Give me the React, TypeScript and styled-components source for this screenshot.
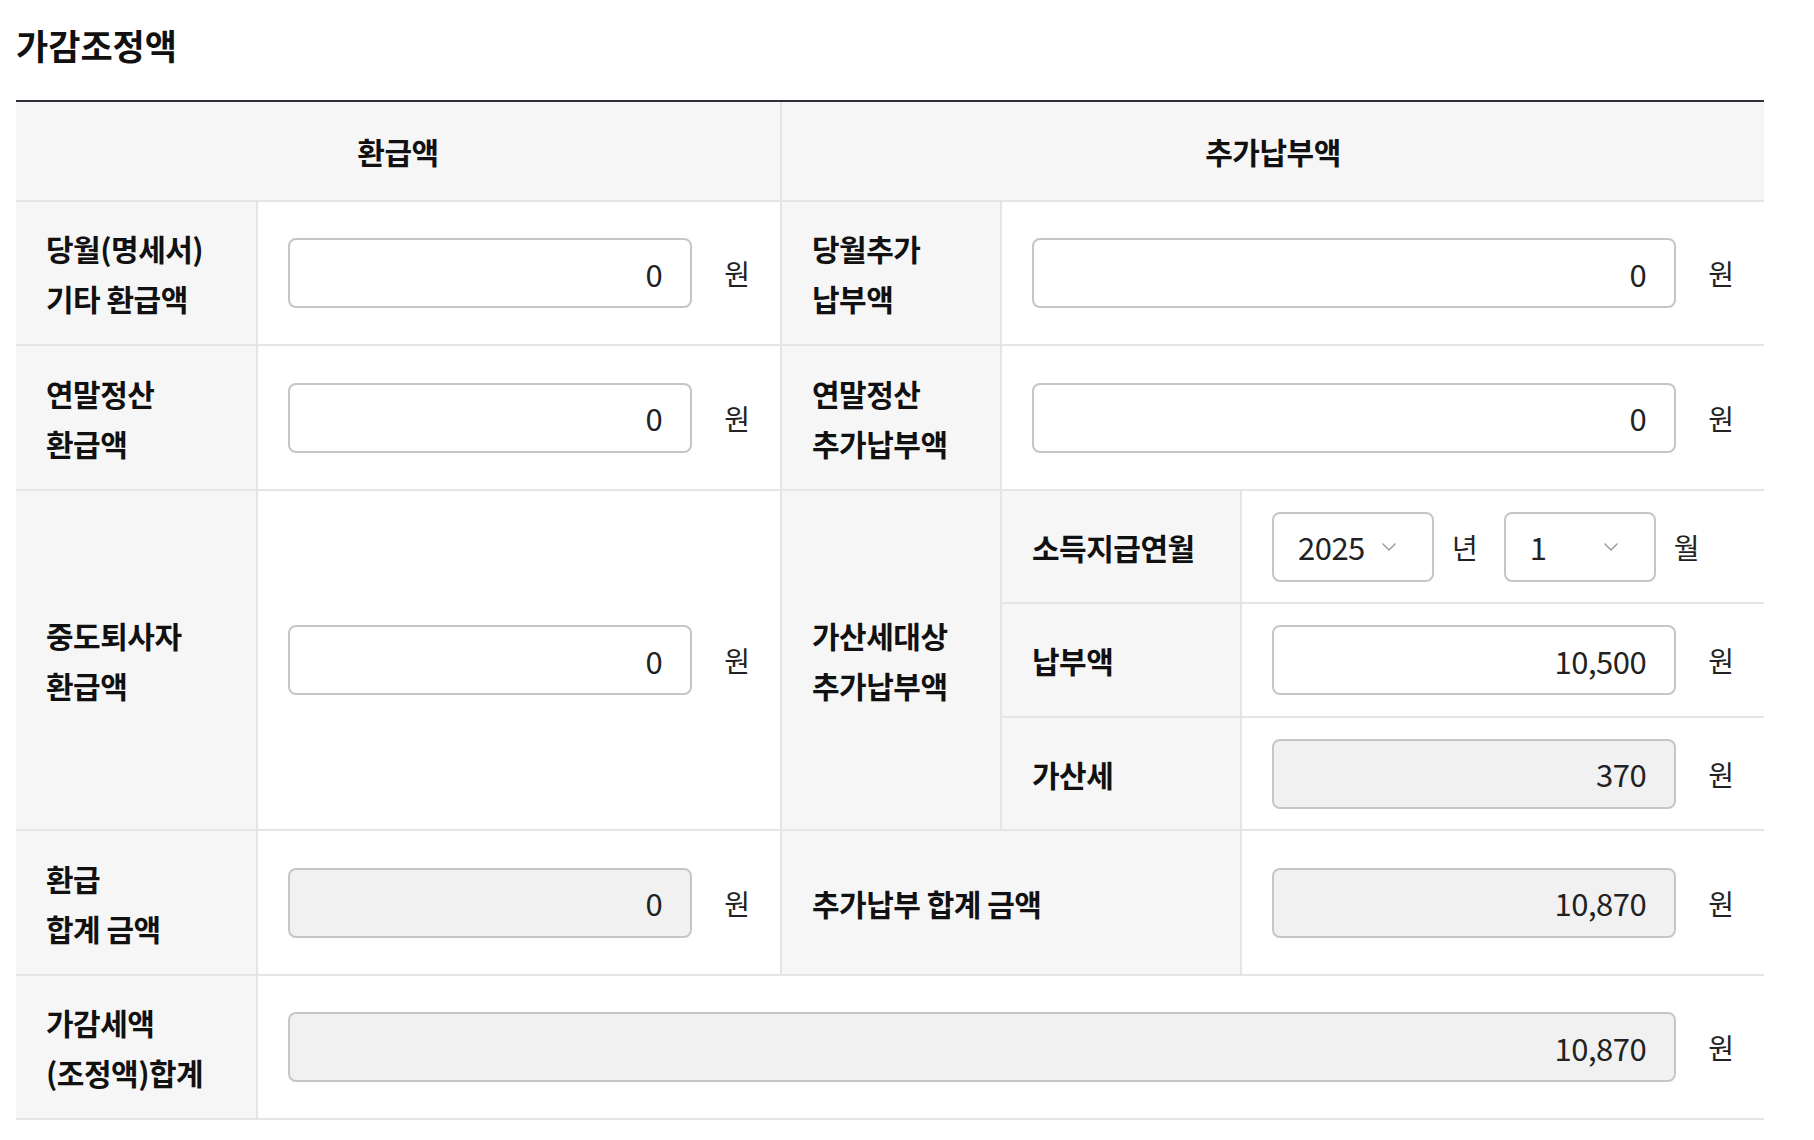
import React from 'react';
import styled, { createGlobalStyle } from 'styled-components';

const GlobalStyle = createGlobalStyle`
  * {
    box-sizing: border-box;
  }
  body {
    margin: 0;
    background: #fff;
    font-family: 'Noto Sans CJK KR', 'Noto Sans', sans-serif;
    color: #111;
  }
`;

type AmountProps = {
  value: string;
  readOnly?: boolean;
};

const Amount: React.FC<AmountProps> = (p) => (
  <>
    <Input
      type='text'
      defaultValue={p.value}
      readOnly={p.readOnly}
      $readOnly={!!p.readOnly}
    />
    <Unit>원</Unit>
  </>
);

const Chevron = () => (
  <ChevronIcon
    viewBox='0 0 20 20'
    width='20'
    height='20'
  >
    <path
      d='M4 7l6 6 6-6'
      fill='none'
      stroke='#a0a0a0'
      strokeWidth='1.6'
      strokeLinecap='round'
      strokeLinejoin='round'
    />
  </ChevronIcon>
);

const App: React.FC = () => {
  return (
    <Page>
      <GlobalStyle />
      <Title>가감조정액</Title>
      <Table>
        <Head $col='1 / 3'>환급액</Head>
        <Head $col='3 / 6'>추가납부액</Head>

        <Label $col='1'>
          당월(명세서)
          <br />
          기타 환급액
        </Label>
        <Value $col='2'>
          <Amount value='0' />
        </Value>
        <Label $col='3'>
          당월추가
          <br />
          납부액
        </Label>
        <Value $col='4 / 6'>
          <Amount value='0' />
        </Value>

        <Label $col='1'>
          연말정산
          <br />
          환급액
        </Label>
        <Value $col='2'>
          <Amount value='0' />
        </Value>
        <Label $col='3'>
          연말정산
          <br />
          추가납부액
        </Label>
        <Value $col='4 / 6'>
          <Amount value='0' />
        </Value>

        <Label
          $col='1'
          $row='span 3'
        >
          중도퇴사자
          <br />
          환급액
        </Label>
        <Value
          $col='2'
          $row='span 3'
        >
          <Amount value='0' />
        </Value>
        <Label
          $col='3'
          $row='span 3'
        >
          가산세대상
          <br />
          추가납부액
        </Label>
        <Label $col='4'>소득지급연월</Label>
        <Value $col='5'>
          <SelectBox $width={162}>
            <Select defaultValue='2025'>
              <option value='2024'>2024</option>
              <option value='2025'>2025</option>
            </Select>
            <Chevron />
          </SelectBox>
          <DateUnit>년</DateUnit>
          <SelectBox $width={152}>
            <Select defaultValue='1'>
              {Array.from({ length: 12 }, (_, i) => (
                <option
                  key={i}
                  value={String(i + 1)}
                >
                  {i + 1}
                </option>
              ))}
            </Select>
            <Chevron />
          </SelectBox>
          <DateUnit>월</DateUnit>
        </Value>
        <Label $col='4'>납부액</Label>
        <Value $col='5'>
          <Amount value='10,500' />
        </Value>
        <Label $col='4'>가산세</Label>
        <Value $col='5'>
          <Amount
            value='370'
            readOnly
          />
        </Value>

        <Label $col='1'>
          환급
          <br />
          합계 금액
        </Label>
        <Value $col='2'>
          <Amount
            value='0'
            readOnly
          />
        </Value>
        <Label $col='3 / 5'>추가납부 합계 금액</Label>
        <Value $col='5'>
          <Amount
            value='10,870'
            readOnly
          />
        </Value>

        <Label $col='1'>
          가감세액
          <br />
          (조정액)합계
        </Label>
        <Value $col='2 / 6'>
          <Amount
            value='10,870'
            readOnly
          />
        </Value>
      </Table>
    </Page>
  );
};

export default App;

const Page = styled.div`
  width: 1814px;
  padding: 20px 50px 0 16px;
`;

const Title = styled.h2`
  margin: 0 0 30px;
  height: 50px;
  font-size: 35px;
  line-height: 50px;
  font-weight: 700;
  color: #111;
`;

const Table = styled.div`
  display: grid;
  width: 1748px;
  grid-template-columns: 240px 524px 220px 240px 524px;
  grid-template-rows: 100px 144px 145px 113px 114px 113px 145px 144px;
  border-top: 2px solid #2f2f3a;
`;

const Cell = styled.div<{ $col: string; $row?: string }>`
  grid-column: ${(p) => p.$col};
  grid-row: ${(p) => p.$row ?? 'auto'};
  display: flex;
  align-items: center;
  border-bottom: 2px solid #e5e5e5;
  border-left: ${(p) => (p.$col.startsWith('1') ? 'none' : '2px solid #e5e5e5')};
`;

const Head = styled(Cell)`
  justify-content: center;
  background: #f6f6f6;
  font-size: 30px;
  font-weight: 700;
  letter-spacing: -0.5px;
  color: #111;
`;

const Label = styled(Cell)`
  padding: 0 30px;
  background: #f6f6f6;
  font-size: 30px;
  line-height: 50px;
  font-weight: 700;
  letter-spacing: -0.5px;
  color: #111;
`;

const Value = styled(Cell)`
  padding: 0 30px;
  gap: 32px;
  background: #fff;
`;

const Input = styled.input<{ $readOnly: boolean }>`
  flex: 1;
  min-width: 0;
  height: 70px;
  padding: 0 28px 0 22px;
  border: 2px solid #c6c6c6;
  border-radius: 8px;
  background: ${(p) => (p.$readOnly ? '#f1f1f1' : '#fff')};
  font-family: inherit;
  font-size: 31px;
  letter-spacing: -0.5px;
  color: #222;
  text-align: right;
  outline: none;
`;

const Unit = styled.span`
  font-size: 28px;
  color: #222;
  white-space: nowrap;
`;

const SelectBox = styled.div<{ $width: number }>`
  position: relative;
  width: ${(p) => p.$width}px;
  height: 70px;
  flex: none;
`;

const Select = styled.select`
  width: 100%;
  height: 100%;
  padding: 0 44px 0 24px;
  appearance: none;
  border: 2px solid #c6c6c6;
  border-radius: 8px;
  background: #fff;
  font-family: inherit;
  font-size: 31px;
  letter-spacing: -0.5px;
  color: #222;
  outline: none;
`;

const ChevronIcon = styled.svg`
  position: absolute;
  right: 35px;
  top: 25px;
  pointer-events: none;
`;

const DateUnit = styled.span`
  margin: 0 -6px 0 -14px;
  font-size: 28px;
  color: #222;
  white-space: nowrap;
`;
